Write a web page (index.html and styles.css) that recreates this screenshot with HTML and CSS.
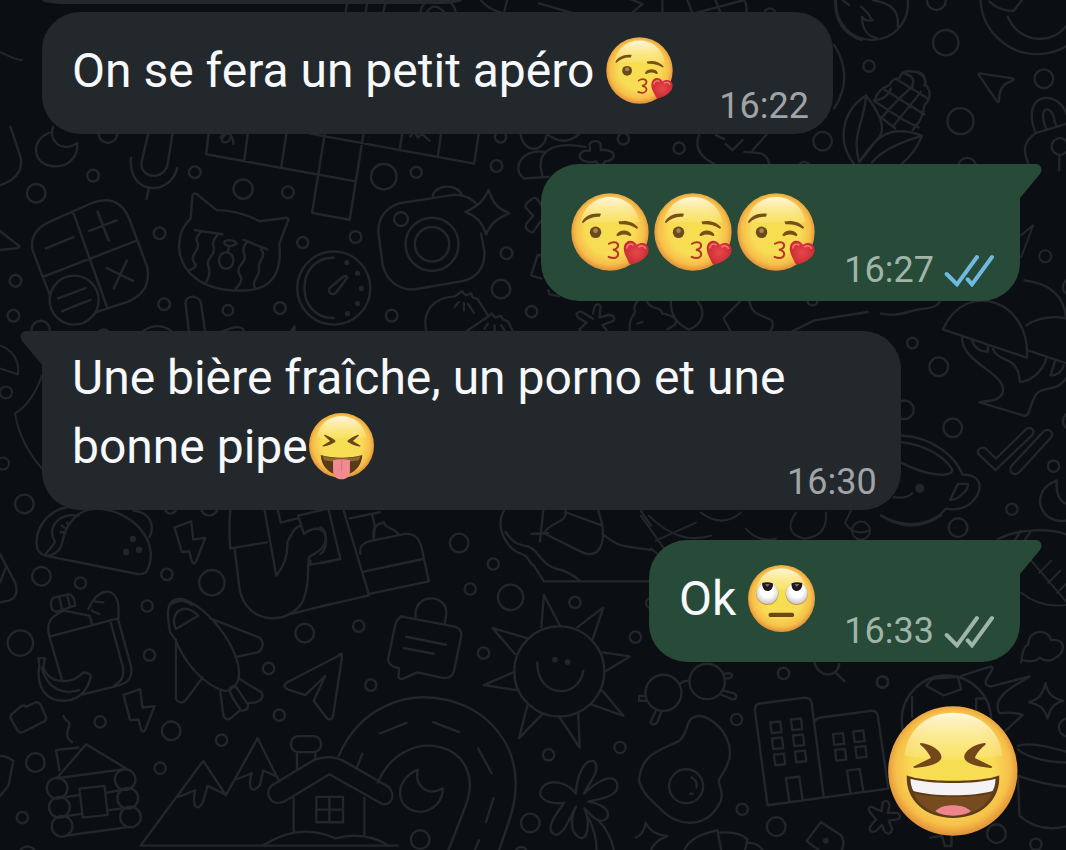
FILE: index.html
```html
<!DOCTYPE html>
<html lang="fr">
<head>
<meta charset="utf-8">
<meta name="viewport" content="width=device-width, initial-scale=1">
<title>Discussion</title>
<link rel="stylesheet" href="styles.css">
</head>
<body>
<svg class="defs" aria-hidden="true">
  <defs>
    <radialGradient id="skin" cx=".5" cy=".48" r=".52">
      <stop offset="0" stop-color="#f5df50"/><stop offset=".6" stop-color="#f8dc56"/><stop offset=".85" stop-color="#f6bf49"/><stop offset="1" stop-color="#e28f38"/>
    </radialGradient>
    <linearGradient id="shine" x1="0" y1="0" x2="0" y2="1">
      <stop offset="0" stop-color="#fff8dc"/><stop offset="1" stop-color="#fbe77c" stop-opacity=".45"/>
    </linearGradient>
    <radialGradient id="eyeball" cx=".5" cy=".4" r=".6">
      <stop offset=".5" stop-color="#fff"/><stop offset="1" stop-color="#c9c6cf"/>
    </radialGradient>
    <radialGradient id="heart" cx=".5" cy=".5" r=".6">
      <stop offset="0" stop-color="#e5484a"/><stop offset="1" stop-color="#c9242f"/>
    </radialGradient>
    <symbol id="kiss" viewBox="697 578 232 232">
      <circle cx="813" cy="694" r="115" fill="url(#skin)"/>
      <path d="M725 665C735 616 772 590 813 590s78 26 88 75z" fill="url(#shine)"/>
      <path d="M729 665c10-19 31-29 57-25l-3 9c-19-2-36 5-50 18z" fill="#765016"/>
      <path d="M838 663c22-5 45 0 59 18l-4 3c-16-10-31-14-52-13z" fill="#765016"/>
      <circle cx="770" cy="695" r="17" fill="#6a4a1d"/><circle cx="770" cy="690" r="7" fill="#a98455"/>
      <path d="M833 701c7-15 36-15 43 0 2 5-2 6-6 4-11-5-20-5-31 0-5 2-8 0-6-4z" fill="#765016"/>
      <path d="M810 729c14-9 28-4 27 6-1 7-7 10-15 12 10 2 17 7 15 15-2 10-16 12-28 6" fill="none" stroke="#b33526" stroke-width="6" stroke-linecap="round"/>
      <path d="M877 791c-5 0-8-5-10-11-8-16-16-30-12-44 4-17 26-23 38-4 14-11 35-4 35 14 0 22-25 38-51 45z" fill="url(#heart)"/>
      <path d="M863 741c1-10 10-14 18-9M899 738c7-5 16-3 19 4" fill="none" stroke="#ef7975" stroke-width="5" stroke-linecap="round"/>
    </symbol>
    <symbol id="tongue" viewBox="928 279 200 206">
      <circle cx="1028" cy="379" r="100" fill="url(#skin)"/>
      <path d="M951 355c8-42 38-66 77-66s69 24 77 66z" fill="url(#shine)"/>
      <path d="M977 346c21 8 33 18 33 20s-14 12-38 16c-3 0-3-3 0-4l21-13-17-15c-2-3-1-5 1-4zM1079 346c-21 8-33 18-33 20s14 12 38 16c3 0 3-3 0-4l-21-13 17-15c2-3 1-5-1-4z" fill="#68461a"/>
      <path d="M964 408c38 11 90 11 128 0-2 37-29 62-64 62s-62-25-64-62z" fill="#58391a"/>
      <path d="M970 411c37 9 79 9 116 0-1 6-3 10-6 14-35 6-69 6-104 0-3-4-5-8-6-14z" fill="#8b6a2c"/>
      <path d="M1002 424q26-5 52 0v32c0 18-10 27-26 27s-26-9-26-27z" fill="#f08b91"/><path d="M1028 426v30" stroke="#de7480" stroke-width="4" stroke-linecap="round"/>
    </symbol>
    <symbol id="roll" viewBox="329 107 198 198">
      <circle cx="428" cy="206" r="99" fill="url(#skin)"/>
      <path d="M353 180c8-40 37-63 75-63s67 23 75 63z" fill="url(#shine)"/>
      <circle cx="386" cy="192" r="33" fill="#c99a42"/><circle cx="473" cy="192" r="33" fill="#c99a42"/>
      <circle cx="386" cy="190" r="32" fill="url(#eyeball)"/><circle cx="473" cy="190" r="32" fill="url(#eyeball)"/>
      <path d="M371 160q15-5 31 1c3 11-4 23-15 23s-17-12-16-24zM458 161q15-6 31-1c2 12-5 24-16 24s-17-12-15-23z" fill="#20171b"/>
      <path d="M379 163l15 1-8 7zM466 164l15-1-8 8z" fill="#76747b"/>
      <rect x="390" y="248" width="75" height="13" rx="5" fill="#6c4913"/>
    </symbol>
    <symbol id="laugh" viewBox="53 135 389 390">
      <circle cx="247" cy="330" r="194" fill="url(#skin)"/>
      <path d="M102 283C112 200 174 155 247 155s139 45 149 128c-80 18-210 18-294 0z" fill="url(#shine)"/>
      <path d="M152 246c34 4 61 25 61 43-2 19-36 27-80 32-5 0-6-4-1-6l49-24c-7-18-19-29-31-39-3-4-1-6 2-6zM342 246c-34 4-61 25-61 43 2 19 36 27 80 32 5 0 6-4 1-6l-49-24c7-18 19-29 31-39 3-4 1-6-2-6z" fill="#74471a"/>
      <path d="M109 343c43 22 235 22 277 0 5 74-54 128-138 128S104 417 109 343z" fill="#5e3c17"/>
      <path d="M120 353c54 17 201 17 255 0 0 15-3 27-9 37-53 17-183 17-237 0-6-10-9-22-9-37z" fill="#f4f2f4"/>
      <path d="M130 397c56 15 179 15 235 0-18 42-62 67-117 67s-100-25-118-67z" fill="#774b20"/>
      <path d="M195 451c18-24 85-24 106 0-26 18-82 17-106 0z" fill="#ed858d"/>
    </symbol>
    <symbol id="ticks" viewBox="1211 286 150 99">
      <path d="M1219 346l31 31 60-82M1282 362l13 15 60-82" fill="none" stroke="currentColor" stroke-width="12" stroke-linecap="round"/>
    </symbol>
    <symbol id="tail" viewBox="0 0 22 34">
      <path d="M0 0H15C21 0 23 5 20 10L0 34z" fill="currentColor"/>
    </symbol>
  </defs>
</svg>

<svg class="wallpaper" viewBox="0 0 1066 850" preserveAspectRatio="xMinYMin slice" aria-hidden="true">
  <!-- microphone, calculator, cat, timer -->
  <g transform="translate(0 130) scale(.3444)">
    <path d="M30-10l30 90q10 55-60 80M-10 285l64 50q5 5-5 7l-55 6M152 5c-65 15-65 100 10 100 40 0 65-30 62-68-45 30-85-5-70-47M430 10l-20 85c0 50 70 50 77 0l14-90M380 80c-10 108 112 115 134 30M433 165l-8 34"/>
    <path d="M606 0l-8 70 430 78M720 0l-12 90M832 0l-16 105M942 10l-37 230 109 20L1056 0M900 10l475 87L1390 0M1168 0l-8 52M1280 5l-10 68M640 20c15-25 40-15 25 10-20 15-30-5-12-17 10-8 22 0 24 27M1190 18l12-15 10 18 12-10 22 20"/>
    <path d="M145 265l120-53c65-25 95 10 110 45l52 140c10 55-20 85-55 100l-97 32M145 480L95 350c-10-40 15-70 50-85M211 235l100 280M130 423l268-103M133 343l80-33M258 293l80-31M283 236l32 84M310 400l76 37M368 378l-38 81M168 488l80-30M180 525l82-33"/>
    <circle cx="215" cy="493" r="71"/>
    <path d="M553 255l5-65c2-8 10-8 15-3l55 45c50 0 85 12 125 32l78-10q8 2 4 10l-25 65c10 95-30 135-105 136-120 4-180-55-185-120-3-40 10-65 33-90zM565 290l80 12M707 318l68 28M583 295q-18 17-11 30t-6 30 -2 30-14 20M630 305q-16 17-11 32t-8 30-6 30-6 42M715 325q-14 17-7 32t-8 32-4 32-12 38M757 345q12 14 2 28t-8 28-8 28-4 30M652 322c-5 15 15 18 34 8 0-10-20-13-34-8zM665 337l-5 18"/>
    <ellipse cx="656" cy="378" rx="21" ry="24"/>
    <circle cx="968" cy="458" r="106"/><path d="M968 370c-112-3-115 176 0 175M956 458l35-30q15-10 16 0l-30 40c-10 15-28 5-21-10z"/>
    <g class="dots"><circle cx="1006" cy="384" r="6"/><circle cx="1037" cy="415" r="6"/><circle cx="1048" cy="459" r="6"/><circle cx="1037" cy="503" r="6"/><circle cx="1008" cy="532" r="6"/></g>
    <path d="M1165 211l155-24q40 2 65 30M1255 190c10-35 75-35 85 0M1395 300l10 50c3 50-25 80-65 88l-140 24c-50 0-80-30-90-70l-12-90c-5-50 25-80 65-91M1417 173c15 45 30 55 60 68-35 15-55 30-67 62-12-38-28-52-60-66 35-17 52-30 67-64z"/>
    <circle cx="1253" cy="331" r="77"/><circle cx="1253" cy="331" r="50"/><circle cx="1163" cy="258" r="20"/>
    <path d="M550 600l-12-98c0-25 40-25 45 0l14 96 82-26c35-5 40 25 10 35M395 602c35-45 90-45 120 0M790 602l42-3 22-30v35"/>
    <circle cx="313" cy="10" r="27"/><circle cx="270" cy="132" r="17"/><circle cx="105" cy="183" r="27"/><circle cx="565" cy="122" r="17"/><circle cx="705" cy="171" r="28"/><circle cx="835" cy="180" r="17"/><circle cx="1113" cy="135" r="37"/><circle cx="1207" cy="122" r="16"/><circle cx="1440" cy="104" r="17"/><circle cx="463" cy="299" r="17"/><circle cx="878" cy="326" r="16"/><circle cx="1031" cy="310" r="17"/><circle cx="1469" cy="357" r="17"/><circle cx="1453" cy="461" r="27"/><circle cx="45" cy="437" r="17"/><circle cx="39" cy="538" r="17"/><circle cx="118" cy="580" r="27"/><circle cx="301" cy="595" r="17"/><circle cx="476" cy="505" r="17"/><circle cx="661" cy="522" r="15"/><circle cx="812" cy="516" r="17"/><circle cx="1136" cy="538" r="17"/>
  </g>
  <!-- dumplings, pastry, flowers -->
  <g transform="translate(340 0) scale(.3333)">
    <path d="M20 10l-5 30M80 10l-5 30M135 10l-8 30M240 35c5-50 100-50 105 0M260 35q20-30 50 0M420 0q25 30 70 40l12-50M595 10l105 30M850-10l55 22-35 30M965 40V0M1040 0l15 40M1120-10l20 50M1060 40L1210 0q12 20 5 40M1482 0q0 95 80 120M1480 135q60 95 0 190"/>
    <path d="M540 402c10 60 70 55 77 5M620 402q50 40 95 0M625 530l-75 5c-40-30-5-90 60-80M605 525c-25-85 50-100 130-85M748 440c-10-20 35-25 32-2v12c50-5 50 32 12 34-2 12-20 16-25 0-60 12-65-38-19-32zM1075 405c-20 45 20 75 45 85M1125 405l25 12M1155 432l20 18 30-30M1210 455c35 5 65-5 75 35M1235 450l45-50"/>
    <path d="M258 995c-15-60 20-105 85-107l22-15 10 12 16-6 5 12 15 5 33 52-70 47M355 905l-13 15M370 908v22M382 910l18 27M435 955l18-15 12 12 15-6 8 12 14 5 15 30M442 970l-10 15M462 975v18M482 975l10 15"/>
    <path d="M603 617c-12-25-20-28-30-20-15 10-25 22-15 28l20 22-20 22c-8 15 5 25 18 28l25-35M603 765h-12l-20 60 32 10M622 870l5 12 30 6"/>
    <path d="M757 940l5-22c8-12 20-5 17 6l-3 27 28-7c20 0 20 15 8 20l-27 10 22 27M744 1000l-20-5-8-8 22-20-25-15c-15-15 5-22 15-15l29 18M890 903c-20 20 0 28-10 38-15 18-18 50-5 65M920 905c10 25 40 10 45 35 35 5 50 20 35 35l-20 12M890 970l15-5M990 903c0 40 15 65 55 85 45-20 50-55 25-85M1198 903l-50 50 22 42M1225 903c5 20 10 28 25 38l42 18q10 20-5 34M1350 995l70-35 160-25"/>
    <circle cx="480" cy="410" r="17"/><circle cx="848" cy="416" r="17"/><circle cx="1015" cy="444" r="17"/><circle cx="1445" cy="423" r="28"/><circle cx="573" cy="934" r="17"/><circle cx="1287" cy="42" r="17"/><circle cx="1415" cy="900" r="15"/><circle cx="1390" cy="502" r="17"/>
  </g>
  <!-- corn, padlock, clock face -->
  <g transform="translate(830 0) scale(.3333)">
    <circle cx="123" cy="12" r="108"/><circle cx="618" cy="-8" r="170"/>
    <path d="M35 0l20 16M90 20c35 30 25 35 35 40-15 5-25 0-32-10 0 40 20 60 45 65M125 0c55 10 80 30 75 80M475 5q30 28 72 28l28-36M530 50c35 85 140 85 180 20"/>
    <path d="M68 490C15 420 35 330 105 286c55 70 55 110 35 130l-55 70C60 400 100 370 105 286M85 485c50-75 90-115 188-78-40 10-120 40-150 80M273 407q-20 50-60 83M130 300c10-25 20-35 45-45 10-20 20-20 30-20 10-30 35-20 50-20 30 5 25 20 30 40 15 20 15 40-5 60-5 45-25 60-35 75M160 268l120 75M200 240l90 55M150 355q60-70 95-95M185 380l85-105M213 218q45 10 30 40M255 215q35 15 25 42M128 302l85 55 50 25M148 350l45 35M130 300q35 0 50-35"/>
    <path d="M445 220l100 15q5 3-3 8-40 10-38 60-2 5-7 0l-55-80zM612 395c-45-120 70-130 95-50M645 385c-30-70 20-75 25-20l7 15M710 370l-95 28c-45 30-40 60-15 112"/><circle cx="686" cy="439" r="25"/><path d="M684 464v46"/>
    <circle cx="316" cy="2" r="28"/><circle cx="344" cy="128" r="38"/><circle cx="114" cy="198" r="17"/><circle cx="388" cy="363" r="39"/><circle cx="638" cy="236" r="28"/><circle cx="408" cy="500" r="27"/>
  </g>
  <!-- mushrooms, double tick, cup -->
  <g transform="translate(880 280) scale(.3333)">
    <path d="M0 100c60 10 80-10 130-15q40-5 45-20M185 147c70-155 265-85 252 85zM430 0c80 10 120 50 125 115M435 135q55-35 125-20M440 210l120 40M243 170c-5 80 145 110 120 170-15 25-35 18-68 26l135 40c20 0 15-45 40-70 30-20 60 0 90-50M335 205c10 30 50 30 65 50 20 25 10 30 17 50 40-5 70-40 78-70M272 178q10 35 48 36v-20M522 240l-14 45q30 0 40-30"/>
    <path d="M343 569l-50-47c-10-15 10-25 20-18l32 30 90-88c15-10 28 5 18 18zM392 555l90-97c15-20 38-5 28 12l-93 102c-18 20-38 0-25-17zM62 465c90 5 160 60 182 117 70 0 60 60 20 90q-30 20-70 12C160 730 80 750 0 705M62 485c70 10 125 40 150 80 10 30-80 20-150-18M230 610h30c5 15-30 50-53 48zM38 650q40 5 55-12M525 600c-80 30-55 130 30 120M527 600c-5 40 10 65 30 70M350 775c60-30 160-35 215-10M420 750l-20 30M450 750l-20 30"/>
    <g class="dots"><circle cx="116" cy="623" r="12"/></g>
    <circle cx="94" cy="188" r="16"/><circle cx="173" cy="259" r="28"/><circle cx="70" cy="388" r="28"/><circle cx="215" cy="442" r="28"/><circle cx="517" cy="557" r="17"/><circle cx="392" cy="686" r="17"/><circle cx="231" cy="741" r="28"/><circle cx="572" cy="422" r="27"/><circle cx="569" cy="20" r="24"/>
  </g>
  <path d="M1020 235l12-10-12 32M1030 560l36 42M1038 572l12-12M1047 582l12-12M1056 592l12-12M1020 592q20 16 46 12"/><circle cx="1044" cy="256" r="6"/>
  <!-- taco, groceries, rocket, cabin, mountains -->
  <g transform="translate(0 500) scale(.3333)">
    <path d="M200 20c-60 10-100 70-88 125 20 35 65 20 75-20 10-60 50-100 100-100 110 0 195 100 155 182-5 10-15 15-30 13L135 165M235 45c-60-10-95 35-70 80l-28 35M400 30c50 5 65 45 48 80M185 75l8 6M200 65l6 10M182 95h10M0 160l45 85q15 45-20 55L0 305M0 245l18-45"/>
    <path d="M523 80l50-18 6 54 36-4-28 72q-7 10-12-2l-8-30-22 2zM690 30q-5 55 0 113l110-18M703 145l15 120c20 110 150 110 190 35 20-50 12-80 18-130 40-25 50-30 50-60-5-35-40-30-65-10l-18-55 130-30M793 30l35 195c25-30 35-60 33-100 20-40 25-45 40-50M833 30l8 36 50-13M870 340l120-30M930 180v12l60-10"/>
    <path d="M148 408l205-55 40 145c5 40-15 50-45 58l-100 25M148 408c-15-55 20-65 42-78l78 15 8 25M153 315q-2-20 10-25l45-10q15 5 17 35l-55 18q-15 0-17-18zM178 290l8 36M202 285l8 34M265 325c30-65 80-70 90-10v40M275 330l22 10M285 303l25 2M330 358l38 140q8 40-25 55M148 408l38 130M115 472l20 0-5 25c15 55 85 55 120 18 20 0 25 10 20 20-15 55-60 75-110 60-35-15-50-50-42-105zM125 500c20 75 75 80 112 68"/>
    <path d="M510 395c-10-50-15-100 30-100 75 10 190 155 175 238-5 20-20 35-40 38-60-15-120-80-150-155zM515 310q30-20 60 2M527 385l67-40c-40-45-90-10-67 40zM630 353l148 58q20 20-3 43l-70 15M527 415v180q15 20 32 0l48-65M660 572l10 75q10 15 25 3l25-22M718 535l66 40q10 20-18 30l-25 2M687 565c10-15 20-10 25 0l30 45c5 15-10 22-20 18-15-20-30-42-35-63z"/>
    <path d="M370 582l50-17 7 55 36-4-28 72q-7 10-12-2l-8-30-25 2zM35 640l30-25q10-3 13 3l30-14q10 0 15 10l15 35q2 10-10 15l-55 28q-15 8-22-6l-18-32q-5-10 3-14zM190 645l8 14c30 10-20 40 18 65"/>
    <path d="M178 808l-10-60 67-8M170 832l88-102 122 74zM200 888l40-6M203 945l40-6M318 876l40-8M322 928l40-5M238 863l75-8 10 87-75 8zM205 1003l185-25M0 765q20 0 40 15l-15 75L0 885"/>
    <circle cx="171" cy="862" r="31"/><circle cx="178" cy="919" r="31"/><circle cx="186" cy="976" r="31"/><circle cx="375" cy="836" r="31"/><circle cx="383" cy="892" r="31"/><circle cx="391" cy="948" r="31"/>
    <path d="M422 1033l187-253 68 103 95-171 65 130M535 888l50-20c-12 50 10 70 25 30l12-43 52 25M710 835l44-18c-12 45 0 65 25 35l10-43 42 18M422 1034h770"/>
    <path d="M1135 903L987 820 850 903c-40 15-60-30-35-50l125-75q50-20 95 5l130 75c30 40-10 65-30 45zM890 755v50M945 755v20M880 890v100M790 1032c80-50 150-50 215-20 60-15 110-10 160 22M1092 890v115M948 888h80v76h-80zM987 888v76M948 926h80"/><rect x="872" y="706" width="90" height="48" rx="22"/>
    <path d="M1025 460l-165 85q-15 10 0 20l55 18 60-58-35 75 40 53q15 8 18-8l27-175q-2-15-10-8z"/>
    <g class="dots"><circle cx="398" cy="115" r="8"/><circle cx="378" cy="154" r="8"/><circle cx="417" cy="147" r="8"/></g>
    <circle cx="73" cy="10" r="28"/><circle cx="124" cy="227" r="28"/><circle cx="241" cy="247" r="17"/><circle cx="61" cy="427" r="38"/><circle cx="500" cy="221" r="17"/><circle cx="635" cy="246" r="38"/><circle cx="441" cy="316" r="17"/><circle cx="448" cy="463" r="17"/><circle cx="913" cy="397" r="28"/><circle cx="805" cy="503" r="17"/><circle cx="837" cy="643" r="17"/><circle cx="664" cy="718" r="17"/><circle cx="513" cy="690" r="28"/><circle cx="300" cy="663" r="17"/><circle cx="106" cy="785" r="28"/><circle cx="480" cy="802" r="17"/><circle cx="67" cy="950" r="17"/><circle cx="82" cy="1060" r="24"/><circle cx="627" cy="20" r="25"/><circle cx="511" cy="22" r="17"/>
  </g>
  <!-- cake, chat padlock, road, sun, flower -->
  <g transform="translate(320 500) scale(.3333)">
    <path d="M25 30l35 145-60 12M70 30l75 250M88 53l90-18M155 42l8 35c-5 15-5 35-3 40M190 65c-40 10-25 30-30 45M190 65c5 22 35 15 45 38M120 160c-5-25 10-35 35-40l100-20c30-2 40 15 48 40l22 102-182 38M130 213l178-38M0 318l145-34M0 80c25 10 20 70 0 80"/>
    <path d="M285 348c-5-75 100-70 92-5l-4 25M240 347l160 30q25 5 22 30l-22 105q-5 20-30 20l-80-17-45 20q-15 0-10-15v-18c-30-5-35-20-30-38l18-85q5-30 27-32zM257 408l120 24M250 442l90 17"/>
    <path d="M550 30c-25 45 0 100 40 125 40 10 30 30 50 40l30 47h320M555 95c30 40 40 35 55 40 40 0 50 60 100 70 30 5 50 20 70 37M633 100l50-2M668 30l-10 92M735 30c5 40-45 30-65 68l110 55c40 20 75 0 65-80l-12-43M735 35l110 40M845 100c50 40 55 35 145 48M960 30l30 45"/>
    <circle cx="716" cy="512" r="135"/><path d="M662 380l8-97 48 92M770 380l78-60-32 95M845 455l82 12-76 47M845 570l63 75-98-35M773 640l4 100-62-93M665 640l-70 72 26-100M588 568l-98-15 92-40M583 460l-67-78 103 30M650 485c0 110 125 110 138 25"/>
    <g class="dots"><circle cx="703" cy="477" r="7"/><circle cx="741" cy="484" r="7"/></g>
    <path d="M55 765c130-300 565-185 528 120-5 50-20 80-48 165M172 845c80-185 330-120 265 65l-54 140M108 803l18-45M178 698l80-32M338 664l78 30M473 743l40 74M519 892l-23 72M475 1018l-14 35M292 806c-75 30-70 125 10 127 40-5 65-35 65-70-50 25-85-10-75-57z"/>
    <path d="M765 878c5-55 25-105 55-97 25 25-20 70-30 98 30-30 80-65 98-35 15 40-45 50-85 58 35 5 70 25 55 50-25 25-50-15-67-30 15 30 15 85-8 90-35-10-35-55-17-95-15 25-40 95-65 83-30-15 5-60 30-95-25 5-65 0-72-25 0-45 70-50 107-2M803 950q25 50 25 100M830 955q40 40 50 95"/>
    <circle cx="416" cy="127" r="28"/><circle cx="518" cy="190" r="17"/><circle cx="449" cy="265" r="17"/><circle cx="570" cy="290" r="38"/><circle cx="763" cy="305" r="17"/><circle cx="115" cy="376" r="17"/><circle cx="489" cy="457" r="17"/><circle cx="151" cy="553" r="17"/><circle cx="944" cy="409" r="17"/><circle cx="898" cy="740" r="17"/><circle cx="684" cy="762" r="17"/><circle cx="629" cy="966" r="28"/><circle cx="299" cy="1016" r="28"/><circle cx="602" cy="1055" r="17"/><circle cx="991" cy="307" r="15"/>
  </g>
  <!-- shapes along the gap under the third message -->
  <path d="M650 548l40 30M640 515l24 34M648 515q30 30 62 20M655 540l40-18M700 512q22 16 40 0M745 528q12 14 30 10M795 512q-14 20 8 26q24-2 22-26M850 510l-6 12q8 14 24 8M880 515q30 20 60 0"/><circle cx="860" cy="530" r="9"/>
  <!-- glasses, egg, buildings, croissant -->
  <g transform="translate(640 650) scale(.3333)">
    <circle cx="68" cy="126" r="54"/><circle cx="199" cy="92" r="53"/><path d="M118 98q15-10 28-8M250 70c15-5 25-2 23 5s-5 8-20 8M250 120l30 8c10 5 8 18-5 18l-35-15M45 180l-15 32c-2 12 15 10 20 2l12-32M15 135l-20 0 0 15 22 0M520 35c15 50 70 45 75 5M583 65l28 27"/>
    <path d="M150 205c30-25 70 5 95 35 40 60 20 100-10 145-5 20 15 30 5 65-40 85-130 80-180 25-25-25-55-45-65-85C0 310 55 300 115 270c25-20 20-50 35-65z"/><circle cx="136" cy="406" r="51"/><path d="M152 380q20 10 15 30M148 428l8 0"/>
    <path d="M380 463l-38-285q0-18 15-20l130-17q22-2 25 15l36 280M380 463l362-50-32-220q-5-15-20-13l-150 20q-15 2-18 12M388 215l30-3 4 32-30 3zM450 206l30-3 4 32-30 3zM393 263l30-3 4 32-30 3zM456 254l30-3 4 32-30 3zM399 311l30-3 4 32-30 3zM462 302l30-3 4 32-30 3zM576 250l30-3 4 32-30 3zM637 242l30-3 4 32-30 3zM582 297l30-3 4 32-30 3zM643 289l30-3 4 32-30 3zM445 450l-10-68 40-5 10 70M628 425l-10-66 38-5 11 67"/>
    <path d="M690 488c-15-20 0-25 12-15l20 8 3-25c8-12 22-5 20 10l-5 20 28 0c15 5 10 20-5 20l-20 3 10 25c0 15-15 18-22 8l-8-20-18 18c-15 8-25-5-15-16l15-18zM-15 560q25-10 30-45 15 35 65 40-40 15-50 45M130 600q15-45 100-62l12 65M235 545q60-5 85 20l-8 35M320 575q35 0 50 30M497 570l43-57 60 40q15 20 0 50M497 570l40 30"/>
    <g class="dots"><circle cx="555" cy="569" r="7"/></g>
    <circle cx="428" cy="68" r="17"/><circle cx="724" cy="94" r="17"/><circle cx="287" cy="206" r="17"/><circle cx="304" cy="475" r="17"/><circle cx="406" cy="527" r="28"/>
  </g>
  <!-- football, stars, drum, cloud -->
  <g transform="translate(870 660) scale(.3333)">
    <circle cx="226" cy="178" r="134"/><path d="M165 75l20-22 75-5 10 38-52 18zM123 108v60M315 145v-32h28M270 45l90-28c20 5-45 55 0 60l115-30c-30 20-120 60-90 110q40-5 70 5l-55 50M523 67c5 30 20 45 53 53-30 8-40 25-47 53-10-30-20-40-55-49 30-10 40-22 49-57zM440 255c40-15 110 10 150 18M440 265c20 20 80 40 150 40M440 345c60 20 100 30 150 32M440 345l5 120c40 35 90 45 145 30M178 530l35-5 8 30 20 0 0-35M450 5q5-50 20-52c5-50 60-50 70-15 45-5 45 35 10 55-20 12-35 5-45-2-10 12-40 14-55 4"/>
    <circle cx="35" cy="63" r="17"/><circle cx="376" cy="518" r="28"/><circle cx="494" cy="550" r="17"/><circle cx="590" cy="200" r="27"/>
  </g>
  <!-- pan edge, pizza and bits at the left side -->
  <path d="M22 60q-5 0-22-8M0 345q20 8 18 29l-18-6M42 375q-10 28-27 38q5 30 27 55"/>
  <circle cx="6" cy="392" r="6"/><circle cx="3" cy="463" r="6"/>
</svg>

<main class="chat">
  <div class="previous" aria-hidden="true"></div>

  <article class="bubble received">
    <p class="text">On se fera un petit apéro <svg class="emoji" role="img" aria-label="bisou"><use href="#kiss"/></svg></p>
    <footer class="meta spaced"><time>16:22</time></footer>
  </article>

  <article class="bubble sent">
    <svg class="tail" aria-hidden="true"><use href="#tail"/></svg>
    <p class="text big"><svg class="emoji" role="img" aria-label="bisou"><use href="#kiss"/></svg><svg class="emoji" role="img" aria-label="bisou"><use href="#kiss"/></svg><svg class="emoji" role="img" aria-label="bisou"><use href="#kiss"/></svg></p>
    <footer class="meta"><time>16:27</time><svg class="ticks read" role="img" aria-label="Lu"><use href="#ticks"/></svg></footer>
  </article>

  <article class="bubble received">
    <svg class="tail" aria-hidden="true"><use href="#tail"/></svg>
    <p class="text long">Une bière fraîche, un porno et une bonne pipe<svg class="emoji" role="img" aria-label="tire la langue"><use href="#tongue"/></svg></p>
    <footer class="meta snug"><time>16:30</time></footer>
  </article>

  <article class="bubble sent">
    <svg class="tail" aria-hidden="true"><use href="#tail"/></svg>
    <p class="text">Ok <svg class="emoji" role="img" aria-label="yeux au ciel"><use href="#roll"/></svg></p>
    <footer class="meta"><time>16:33</time><svg class="ticks" role="img" aria-label="Distribué"><use href="#ticks"/></svg></footer>
  </article>

  <svg class="sticker" role="img" aria-label="mort de rire"><use href="#laugh"/></svg>
</main>
</body>
</html>
```
FILE: styles.css
```css
* {
  box-sizing: border-box;
}

body {
  margin: 0;
  position: relative;
  min-height: 100vh;
  overflow: hidden;
  background: #0b0f13;
  color: #f7f8fb;
  font-family: Roboto, "Noto Sans", sans-serif;
}

p {
  margin: 0;
}

.defs {
  position: absolute;
  width: 0;
  height: 0;
}

.wallpaper {
  position: absolute;
  top: 0;
  left: 0;
  width: 100%;
  height: 100%;
  fill: none;
  stroke: #23272b;
  stroke-width: 2;
  stroke-linecap: round;
  stroke-linejoin: round;
}

.wallpaper g {
  stroke-width: 7;
}

.wallpaper .dots {
  fill: #23272b;
  stroke-width: 3;
}

.chat {
  position: relative;
  display: flex;
  flex-direction: column;
  gap: 30px;
  padding: 0 46px 15px 42px;
}

.previous {
  width: 420px;
  height: 4px;
  margin-bottom: -22px;
  border-radius: 0 0 24px 24px / 0 0 4px 4px;
  background: #23282c;
}

.bubble {
  position: relative;
  display: flex;
  align-items: flex-end;
  max-width: 90%;
  border-radius: 38px;
}

.received {
  align-self: flex-start;
  background: #23282c;
}

.sent {
  align-self: flex-end;
  background: #274b38;
}

.tail {
  position: absolute;
  top: 0;
  width: 22px;
  height: 34px;
}

.sent .tail {
  left: 100%;
  color: #274b38;
}

.received .tail {
  right: 100%;
  color: #23282c;
  transform: scaleX(-1);
}

.sent:has(.tail) {
  border-top-right-radius: 0;
}

.received:has(.tail) {
  border-top-left-radius: 0;
}

.text {
  padding: 18px 0 30px 30px;
  font-size: 48px;
  line-height: 56px;
}

.long {
  max-width: 745px;
  padding-top: 19px;
}

.emoji {
  width: 67px;
  height: 67px;
  margin-top: 7px;
  vertical-align: -17px;
}

.big {
  display: flex;
  gap: 5px;
  padding-top: 22px;
}

.big .emoji {
  width: 78px;
  height: 78px;
}

.meta {
  display: flex;
  align-items: center;
  gap: 10px;
  margin-left: 29px;
  padding: 0 24px 7px 0;
  color: #a1a4a7;
  font-size: 36px;
  line-height: 42px;
}

.spaced {
  margin-left: 46px;
}

.snug {
  margin-left: 0;
}

.sent .meta {
  padding: 0 26px 10px 0;
  color: #9fb5a8;
}

.ticks {
  width: 50px;
  height: 33px;
}

.read {
  color: #70b9df;
}

.sticker {
  align-self: flex-end;
  width: 130px;
  height: 130px;
  margin: 14px 2px 0 0;
}
```
